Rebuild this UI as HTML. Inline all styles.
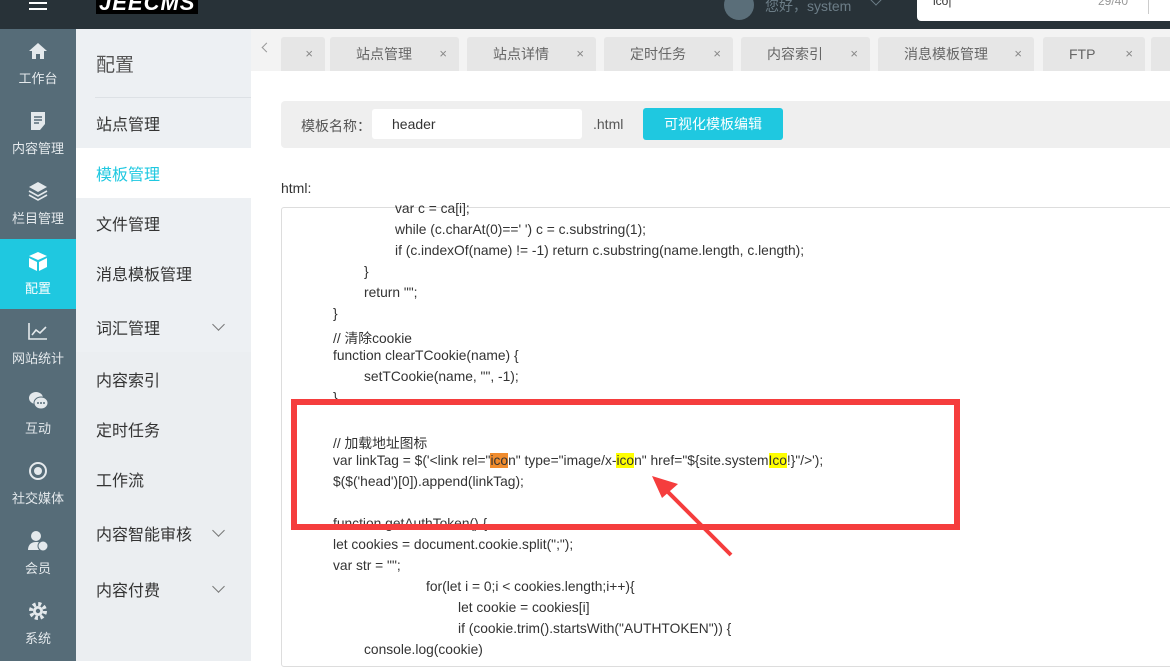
<!DOCTYPE html>
<html><head><meta charset="utf-8"><style>
*{margin:0;padding:0;box-sizing:border-box}
body{width:1170px;height:661px;overflow:hidden;position:relative;font-family:"Liberation Sans","Noto Sans CJK SC",sans-serif;background:#fff;color:#333}
.abs{position:absolute}
#top{left:0;top:0;width:1170px;height:29px;background:#283238}
#nav{left:0;top:29px;width:76px;height:632px;background:#566c78}
.ni{position:absolute;left:0;width:76px;height:70px;color:#e4e9ec;font-size:13px;text-align:center}
.ni span{position:absolute;left:0;width:76px;top:39px}
.ni svg{position:absolute;left:27px;top:11px}
#sub{left:76px;top:29px;width:175px;height:632px;background:#edf0f3}
.si{position:absolute;left:20px;font-size:16px;color:#333}
.ch{position:absolute;left:138px;width:9px;height:9px;border-right:1px solid #777;border-bottom:1px solid #777;transform:rotate(45deg)}
#tabs{left:251px;top:29px;width:919px;height:42px;background:#f3f3f3}
.tab{position:absolute;top:8px;height:34px;background:#e6e6e6;border-radius:3px 3px 0 0;font-size:14px;color:#666;line-height:34px}
.tab .x{position:absolute;right:12px;font-size:13px;color:#888}
.code{position:absolute;font-size:13.8px;color:#333;white-space:pre}
.hl{background:#ffff00}.ho{background:#f08c2e}
</style></head><body>
<div id="top" class="abs">
 <div class="abs" style="left:29px;top:2px;width:18px;height:2px;background:#fff"></div>
 <div class="abs" style="left:29px;top:8px;width:18px;height:2px;background:#fff"></div>
 <div class="abs" style="left:96px;top:-8px;font:italic bold 22px 'Liberation Sans';color:#fff;background:#000;padding:0 3px;height:22px;line-height:22px;letter-spacing:1px">JEECMS</div>
 <div class="abs" style="left:724px;top:-10px;width:30px;height:30px;border-radius:50%;background:#5a6e79"></div>
 <div class="abs" style="left:765px;top:-4px;font-size:14px;color:#6c7d87">您好，system</div>
 <div class="abs" style="left:872px;top:-4px;width:8px;height:8px;border-right:1px solid #6c7d87;border-bottom:1px solid #6c7d87;transform:rotate(45deg)"></div>
 <div class="abs" style="left:917px;top:-5px;width:253px;height:26px;background:#fff;border-radius:0 0 0 4px"></div>
 <div class="abs" style="left:933px;top:-6px;font-size:12px;color:#333">ico|</div>
 <div class="abs" style="left:1098px;top:-6px;font-size:12px;color:#999">29/40</div>
 <div class="abs" style="left:1148px;top:0;width:1px;height:14px;background:#ccc"></div>
</div>
<div id="nav" class="abs">
 <div class="ni" style="top:0"><svg width="22" height="22" viewBox="0 0 22 22"><path d="M2 11L11 3l9 8h-3v8h-4v-5H9v5H5v-8z" fill="#e4e9ec"/></svg><span>工作台</span></div>
 <div class="ni" style="top:70px"><svg width="22" height="22" viewBox="0 0 22 22"><path d="M4 2h14v12l-5 6H4z" fill="#e4e9ec"/><path d="M7 7h8M7 10h8M7 13h5" stroke="#566c78" stroke-width="1.5"/></svg><span>内容管理</span></div>
 <div class="ni" style="top:140px"><svg width="22" height="22" viewBox="0 0 22 22"><path d="M11 2l9 5-9 5-9-5z" fill="#e4e9ec"/><path d="M2 11l9 5 9-5M2 15l9 5 9-5" stroke="#e4e9ec" stroke-width="1.6" fill="none"/></svg><span>栏目管理</span></div>
 <div class="ni" style="top:210px;background:#1fc8e0;color:#fff"><svg width="22" height="22" viewBox="0 0 22 22"><path d="M11 2l9 4-9 4-9-4z M2 8l8 4v9l-8-4z M20 8l-8 4v9l8-4z" fill="#fff"/></svg><span>配置</span></div>
 <div class="ni" style="top:280px"><svg width="22" height="22" viewBox="0 0 22 22"><path d="M2 3v16h18M5 15l4-5 4 3 6-6" stroke="#e4e9ec" stroke-width="1.6" fill="none"/></svg><span>网站统计</span></div>
 <div class="ni" style="top:350px"><svg width="22" height="22" viewBox="0 0 22 22"><ellipse cx="9" cy="8" rx="7" ry="6" fill="#e4e9ec"/><ellipse cx="14" cy="13" rx="7" ry="6" fill="#e4e9ec" stroke="#566c78"/><circle cx="11" cy="13" r="1" fill="#566c78"/><circle cx="14" cy="13" r="1" fill="#566c78"/><circle cx="17" cy="13" r="1" fill="#566c78"/></svg><span>互动</span></div>
 <div class="ni" style="top:420px"><svg width="22" height="22" viewBox="0 0 22 22"><circle cx="11" cy="11" r="8" stroke="#e4e9ec" stroke-width="2" fill="none"/><circle cx="11" cy="11" r="4" fill="#e4e9ec"/></svg><span>社交媒体</span></div>
 <div class="ni" style="top:490px"><svg width="22" height="22" viewBox="0 0 22 22"><circle cx="9" cy="6" r="5" fill="#e4e9ec"/><path d="M1 20c0-6 4-8 8-8s6 1 7 3v5z" fill="#e4e9ec"/><circle cx="16" cy="16" r="5" fill="#e4e9ec" stroke="#566c78"/></svg><span>会员</span></div>
 <div class="ni" style="top:560px"><svg width="22" height="22" viewBox="0 0 22 22"><circle cx="11" cy="11" r="7" stroke="#e4e9ec" stroke-width="4" stroke-dasharray="3 2.5" fill="none"/><circle cx="11" cy="11" r="5" fill="#e4e9ec"/><circle cx="11" cy="11" r="2.2" fill="#566c78"/></svg><span>系统</span></div>
</div>
<div id="sub" class="abs">
 <div class="si" style="top:21px;font-size:19px;color:#555">配置</div>
 <div class="abs" style="left:19px;top:68px;width:156px;height:1px;background:#dde1e5"></div>
 <div class="si" style="top:82px">站点管理</div>
 <div class="abs" style="left:0;top:119px;width:175px;height:50px;background:#fff"></div>
 <div class="si" style="top:132px;color:#1fc8e0">模板管理</div>
 <div class="si" style="top:182px">文件管理</div>
 <div class="si" style="top:232px">消息模板管理</div>
 <div class="si" style="top:286px">词汇管理</div><div class="ch" style="top:291px"></div>
 <div class="abs" style="left:0;top:323px;width:175px;height:309px;background:#ebeef1"></div>
 <div class="si" style="top:338px">内容索引</div>
 <div class="si" style="top:388px">定时任务</div>
 <div class="si" style="top:438px">工作流</div>
 <div class="si" style="top:492px">内容智能审核</div><div class="ch" style="top:497px"></div>
 <div class="si" style="top:548px">内容付费</div><div class="ch" style="top:553px"></div>
</div>
<div id="tabs" class="abs">
 <div class="abs" style="left:12px;top:15px;width:7px;height:7px;border-left:1px solid #999;border-bottom:1px solid #999;transform:rotate(45deg)"></div>
 <div class="tab" style="left:30px;width:44px"><span class="x">×</span></div>
 <div class="tab" style="left:79px;width:129px"><span style="margin-left:26px">站点管理</span><span class="x">×</span></div>
 <div class="tab" style="left:216px;width:129px"><span style="margin-left:26px">站点详情</span><span class="x">×</span></div>
 <div class="tab" style="left:353px;width:129px"><span style="margin-left:26px">定时任务</span><span class="x">×</span></div>
 <div class="tab" style="left:490px;width:129px"><span style="margin-left:26px">内容索引</span><span class="x">×</span></div>
 <div class="tab" style="left:627px;width:156px"><span style="margin-left:26px">消息模板管理</span><span class="x">×</span></div>
 <div class="tab" style="left:792px;width:102px"><span style="margin-left:26px">FTP</span><span class="x">×</span></div>
 <div class="tab" style="left:900px;width:30px"></div>
</div>
<div class="abs" style="left:281px;top:101px;width:889px;height:47px;background:#efefef;border-radius:4px 0 0 4px"></div>
<div class="abs" style="left:301px;top:116px;font-size:14px;color:#555">模板名称：</div>
<div class="abs" style="left:372px;top:109px;width:210px;height:30px;background:#fff;border-radius:3px;font-size:14px;line-height:30px;padding-left:20px">header</div>
<div class="abs" style="left:593px;top:116px;font-size:14px;color:#555">.html</div>
<div class="abs" style="left:643px;top:108px;width:140px;height:32px;background:#1fc8e0;border-radius:3px;color:#fff;font-size:14px;line-height:32px;text-align:center">可视化模板编辑</div>
<div class="abs" style="left:281px;top:180px;font-size:14px;color:#333">html:</div>
<div class="abs" style="left:281px;top:207px;width:900px;height:460px;border:1px solid #ddd;border-radius:3px"></div>
<div class="code" style="left:395px;top:201px">var c = ca[i];</div>
<div class="code" style="left:395px;top:222px">while (c.charAt(0)==' ') c = c.substring(1);</div>
<div class="code" style="left:395px;top:243px">if (c.indexOf(name) != -1) return c.substring(name.length, c.length);</div>
<div class="code" style="left:364px;top:264px">}</div>
<div class="code" style="left:364px;top:285px">return "";</div>
<div class="code" style="left:333px;top:306px">}</div>
<div class="code" style="left:333px;top:327px">// 清除cookie</div>
<div class="code" style="left:333px;top:348px">function clearTCookie(name) {</div>
<div class="code" style="left:364px;top:369px">setTCookie(name, "", -1);</div>
<div class="code" style="left:333px;top:390px">}</div>
<div class="code" style="left:333px;top:432px">// 加载地址图标</div>
<div class="code" style="left:333px;top:453px">var linkTag = $('&lt;link rel="<span class="ho">ico</span>n" type="image/x-<span class="hl">ico</span>n" href="${site.system<span class="hl">Ico</span>!}"/&gt;');</div>
<div class="code" style="left:333px;top:474px">$($('head')[0]).append(linkTag);</div>
<div class="code" style="left:333px;top:516px">function getAuthToken() {</div>
<div class="code" style="left:333px;top:537px">let cookies = document.cookie.split(";");</div>
<div class="code" style="left:333px;top:558px">var str = "";</div>
<div class="code" style="left:426px;top:579px">for(let i = 0;i &lt; cookies.length;i++){</div>
<div class="code" style="left:458px;top:600px">let cookie = cookies[i]</div>
<div class="code" style="left:458px;top:621px">if (cookie.trim().startsWith("AUTHTOKEN")) {</div>
<div class="code" style="left:364px;top:642px">console.log(cookie)</div>
<div class="abs" style="left:291px;top:399px;width:669px;height:131px;border:6px solid #f53d3d"></div>
<svg class="abs" style="left:640px;top:470px" width="100" height="90"><path d="M91 85L22 16" stroke="#f53d3d" stroke-width="4"/><path d="M12 6l26 8-16 14z" fill="#f53d3d"/></svg>
</body></html>
